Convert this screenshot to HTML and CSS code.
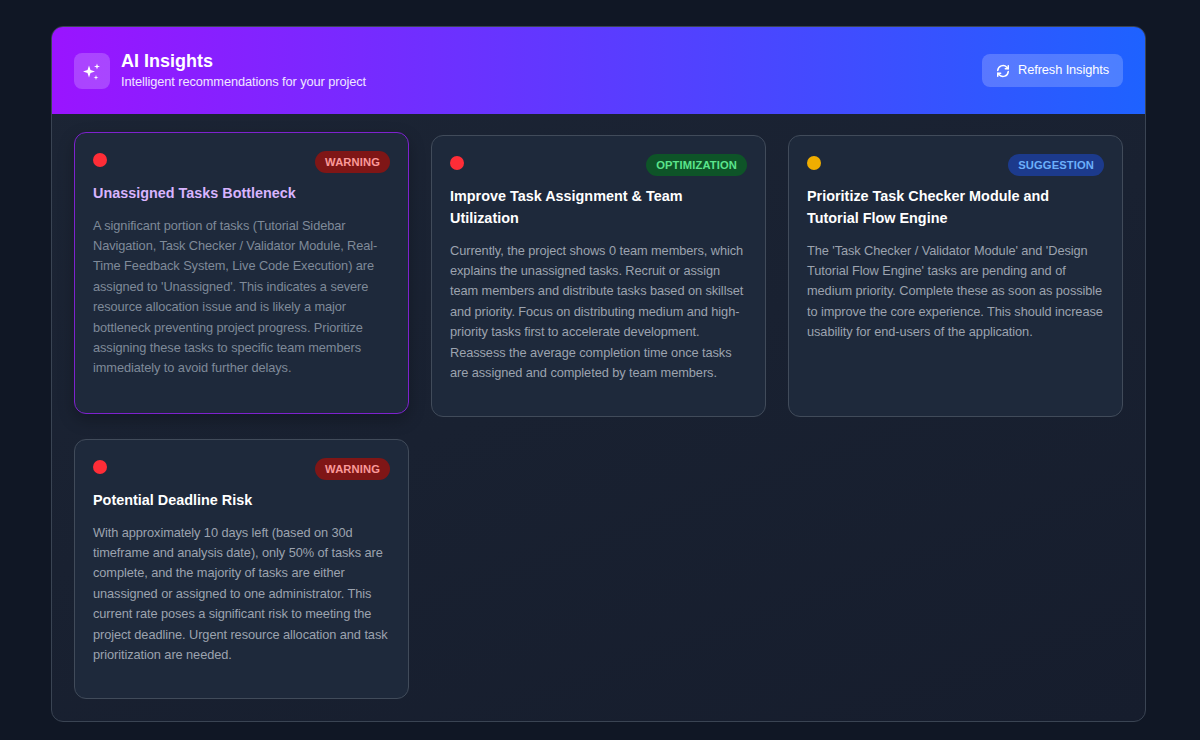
FILE: index.html
```html
<!DOCTYPE html>
<html lang="en">
<head>
    <meta charset="UTF-8">
    <title>AI Insights</title>
    <link rel="stylesheet" href="styles.css">
</head>
<body>
    <div class="insights-panel">
        <div class="panel-header">
            <div class="header-left">
                <div class="header-icon">
                    <svg width="20" height="20" viewBox="0 0 20 20" fill="#fff">
                        <path d="M7 4.500 8.500 9 13 10.500 8.500 12 7 16.500 5.500 12 1 10.500 5.500 9Z"/>
                        <path d="M15 2.500 15.700 4.800 18 5.500 15.700 6.200 15 8.500 14.300 6.200 12 5.500 14.300 4.800Z"/>
                        <path d="M14 14 14.600 15.900 16.500 16.500 14.600 17.100 14 19 13.400 17.100 11.500 16.500 13.400 15.900Z"/>
                    </svg>
                </div>
                <div>
                    <div class="header-title">AI Insights</div>
                    <div class="header-sub">Intelligent recommendations for your project</div>
                </div>
            </div>
            <button class="refresh-btn">
                <svg class="refresh-icon" width="14" height="14" viewBox="0 0 24 24" fill="none" stroke="#fff" stroke-width="2.600" stroke-linecap="round" stroke-linejoin="round">
                    <path d="M3 11a9 9 0 0 1 15.500-5.500L21 8"/>
                    <path d="M21 3v5h-5"/>
                    <path d="M21 13a9 9 0 0 1-15.500 5.500L3 16"/>
                    <path d="M3 21v-5h5"/>
                </svg>
                Refresh Insights
            </button>
        </div>

        <div class="insights-grid">
            <div class="insight-card active">
                <div class="card-top">
                    <span class="dot red"></span>
                    <span class="badge warning">WARNING</span>
                </div>
                <div class="card-title">Unassigned Tasks Bottleneck</div>
                <p class="card-text">A significant portion of tasks (Tutorial Sidebar Navigation, Task Checker / Validator Module, Real-Time Feedback System, Live Code Execution) are assigned to 'Unassigned'. This indicates a severe resource allocation issue and is likely a major bottleneck preventing project progress. Prioritize assigning these tasks to specific team members immediately to avoid further delays.</p>
            </div>

            <div class="insight-card">
                <div class="card-top">
                    <span class="dot red"></span>
                    <span class="badge optimization">OPTIMIZATION</span>
                </div>
                <div class="card-title">Improve Task Assignment &amp; Team Utilization</div>
                <p class="card-text">Currently, the project shows 0 team members, which explains the unassigned tasks. Recruit or assign team members and distribute tasks based on skillset and priority. Focus on distributing medium and high-priority tasks first to accelerate development. Reassess the average completion time once tasks are assigned and completed by team members.</p>
            </div>

            <div class="insight-card">
                <div class="card-top">
                    <span class="dot amber"></span>
                    <span class="badge suggestion">SUGGESTION</span>
                </div>
                <div class="card-title">Prioritize Task Checker Module and Tutorial Flow Engine</div>
                <p class="card-text">The 'Task Checker / Validator Module' and 'Design Tutorial Flow Engine' tasks are pending and of medium priority. Complete these as soon as possible to improve the core experience. This should increase usability for end-users of the application.</p>
            </div>

            <div class="insight-card">
                <div class="card-top">
                    <span class="dot red"></span>
                    <span class="badge warning">WARNING</span>
                </div>
                <div class="card-title">Potential Deadline Risk</div>
                <p class="card-text">With approximately 10 days left (based on 30d timeframe and analysis date), only 50% of tasks are complete, and the majority of tasks are either unassigned or assigned to one administrator. This current rate poses a significant risk to meeting the project deadline. Urgent resource allocation and task prioritization are needed.</p>
            </div>
        </div>
    </div>
</body>
</html>
```

FILE: styles.css
```css
/* Basic styling */
body {
    font-family: "Liberation Sans", Arial, sans-serif;
    background-color: #101725;
    margin: 0;
    padding: 26px 54px 18px 51px;
    height: 740px;
    box-sizing: border-box;
    overflow: hidden;
}

.insights-panel {
    background: linear-gradient(160deg, #1c2535 0%, #161d2d 100%);
    border: 1px solid #3a4453;
    border-radius: 12px;
    overflow: hidden;
}

.panel-header {
    background: linear-gradient(90deg, #9a14ff 0%, #1e62ff 100%);
    height: 87px;
    padding: 0 22px;
    display: flex;
    align-items: center;
    justify-content: space-between;
}

.header-left {
    display: flex;
    align-items: center;
    gap: 11px;
}

.header-icon {
    width: 36px;
    height: 36px;
    border-radius: 8px;
    background-color: rgba(255, 255, 255, 0.2);
    display: flex;
    align-items: center;
    justify-content: center;
}

.header-title {
    font-size: 18px;
    font-weight: 700;
    color: #fff;
    line-height: 21px;
}

.header-sub {
    font-size: 12.800px;
    letter-spacing: -0.09px;
    color: #f0e6ff;
    line-height: 19px;
}

.refresh-btn {
    font-family: inherit;
    font-size: 12.800px;
    letter-spacing: -0.09px;
    color: #fff;
    background-color: rgba(255, 255, 255, 0.2);
    border: none;
    border-radius: 8px;
    height: 33px;
    width: 141px;
    display: flex;
    align-items: center;
    justify-content: center;
    gap: 8px;
    padding: 0 0 2px;
}

.refresh-icon {
    margin-top: 2px;
}

.insights-grid {
    display: grid;
    grid-template-columns: repeat(3, 335px);
    column-gap: 22px;
    row-gap: 22px;
    padding: 21px 22px 22px;
    align-items: start;
}

.insight-card {
    background-color: #1e293b;
    border: 1px solid #414b5a;
    border-radius: 12px;
    padding: 18px 18px 22px;
    box-sizing: border-box;
    height: 282px;
}

.insight-card:nth-child(4) {
    height: 260px;
}

.insight-card.active {
    border-color: #7e22ce;
    transform: translateY(-3px);
    box-shadow: 0 6px 16px rgba(0, 0, 0, 0.25);
}

.insight-card.active .card-title {
    color: #d8b4fe;
}

.insight-card.active .card-text {
    color: #7f8a99;
}

.card-top {
    display: flex;
    justify-content: space-between;
    align-items: flex-start;
    height: 22px;
}

.dot {
    width: 14px;
    height: 14px;
    border-radius: 50%;
    margin-top: 2px;
}

.dot.red {
    background-color: #ff2d37;
}

.dot.amber {
    background-color: #f0ad00;
}

.badge {
    font-size: 11.200px;
    font-weight: 700;
    letter-spacing: 0.12px;
    padding: 0 10px;
    height: 22px;
    line-height: 22px;
    border-radius: 11px;
}

.badge.warning {
    background-color: #7f1616;
    color: #fb9a9a;
}

.badge.optimization {
    background-color: #0e5428;
    color: #5be58c;
}

.badge.suggestion {
    background-color: #1c3a8c;
    color: #6cb0fb;
}

.card-title {
    font-size: 14.400px;
    font-weight: 700;
    color: #fff;
    line-height: 22px;
    margin-top: 9px;
}

.card-text {
    font-size: 12.800px;
    letter-spacing: -0.08px;
    color: #9ca3af;
    line-height: 20.400px;
    margin: 11.500px 0 0;
}
```
